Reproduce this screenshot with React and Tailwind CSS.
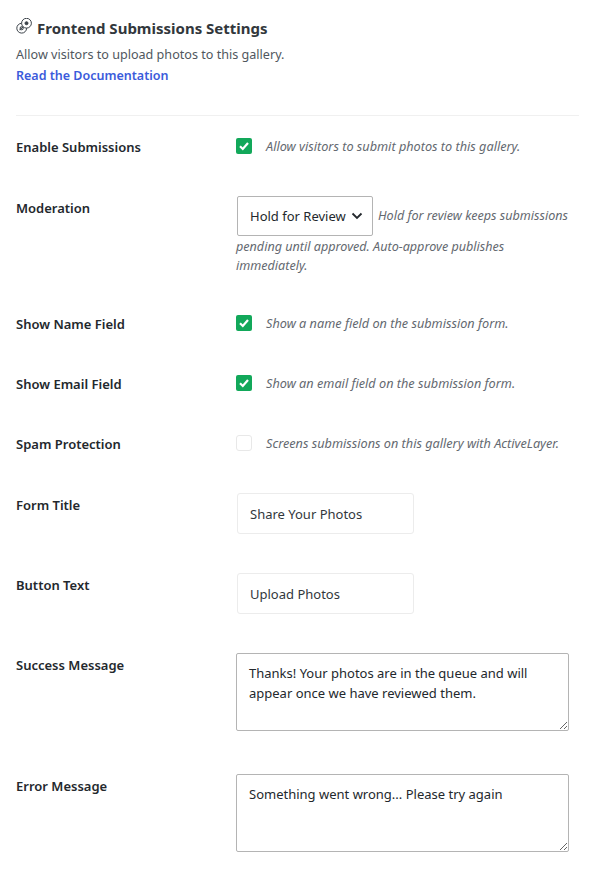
const font = { fontFamily: '"Noto Sans", sans-serif' };

function Check({ on }) {
  if (!on) return <span className="block w-4 h-4 shrink-0 rounded-[3px] border border-[#e8e8e8] bg-white" />;
  return (
    <span className="flex items-center justify-center w-4 h-4 shrink-0 rounded-[2px] bg-[#12a85a]">
      <svg width="12" height="12" viewBox="0 0 12 12" fill="none" stroke="#fff" strokeWidth="2.2"><path d="M2 6.3 L4.8 9 L10 3" /></svg>
    </span>
  );
}

function Label({ children, className = "" }) {
  return <div className={`w-[220px] shrink-0 text-[13px] leading-5 font-semibold text-[#23282d] ${className}`}>{children}</div>;
}

function CheckRow({ label, on, text, className }) {
  return (
    <div className={`flex items-center ${className}`}>
      <Label className="pt-[2px]">{label}</Label>
      <Check on={on} />
      <span className="ml-[14px] text-[12.7px] leading-5 italic text-[#646970] whitespace-nowrap">{text}</span>
    </div>
  );
}

function TextRow({ label, value, className }) {
  return (
    <div className={`flex ${className}`}>
      <Label className="pt-[2px]">{label}</Label>
      <input readOnly value={value} className="ml-px w-[177px] h-[41px] px-3 rounded-[3px] border border-[#ececec] bg-white text-[13px] text-[#32373c] outline-none" />
    </div>
  );
}

function AreaRow({ label, value, className }) {
  return (
    <div className={`flex ${className}`}>
      <Label className="pt-[2px]">{label}</Label>
      <textarea readOnly value={value} className="block w-[333px] h-[78px] px-3 pt-[9px] pb-[5px] rounded-[2px] border border-[#b4b4b4] bg-white text-[13px] leading-5 text-[#23282d] outline-none resize" />
    </div>
  );
}

export default function App() {
  return (
    <div style={font} className="w-[594px] h-[890px] bg-white pl-4 pr-[15px] pt-[18px] overflow-hidden">
      <div className="flex items-center gap-[5px] h-5">
        <svg width="16" height="16" viewBox="0 0 16 16" fill="none" stroke="#3c434a" strokeWidth="1" className="-mt-[5px]">
          <circle cx="5.7" cy="10.2" r="4.9" />
          <circle cx="5.7" cy="10.2" r="1.6" />
          <path d="M3.6 12.2 L7.8 8.2" strokeWidth="1.1" />
          <circle cx="10.5" cy="5.2" r="4.9" fill="#fff" />
          <circle cx="10.5" cy="5.2" r="1.5" fill="#3c434a" />
        </svg>
        <h2 className="text-[15px] leading-5 font-bold text-[#32373c]">Frontend Submissions Settings</h2>
      </div>
      <p className="mt-[7px] text-[12.6px] leading-5 text-[#50575e]">Allow visitors to upload photos to this gallery.</p>
      <a className="block mt-px text-[12.5px] leading-5 font-semibold text-[#3b5bdb]">Read the Documentation</a>
      <div className="mt-[29px] h-px bg-[#f0f0f0]" />

      <CheckRow className="mt-[19px]" label="Enable Submissions" on text="Allow visitors to submit photos to this gallery." />

      <div className="flex mt-[39px]">
        <Label className="pt-[2px]">Moderation</Label>
        <div className="w-[333px] text-[12.6px] leading-[19px] italic text-[#646970]">
          <span className="relative inline-block ml-px mr-[5px] mb-px align-middle not-italic">
            <select className="block appearance-none w-[136px] h-[40px] pl-3 border border-[#b4b4b4] rounded-[2px] bg-white text-[13px] text-[#23282d] outline-none">
              <option>Hold for Review</option>
            </select>
            <svg width="12" height="8" viewBox="0 0 12 8" fill="none" stroke="#23282d" strokeWidth="1.8" className="absolute right-[10px] top-[16px] pointer-events-none">
              <path d="M1.5 1.5 L6 6 L10.5 1.5" />
            </svg>
          </span>
          Hold for review keeps submissions pending until approved. Auto-approve publishes immediately.
        </div>
      </div>

      <CheckRow className="mt-[37px]" label="Show Name Field" on text="Show a name field on the submission form." />
      <CheckRow className="mt-[38px]" label="Show Email Field" on text="Show an email field on the submission form." />
      <CheckRow className="mt-[38px]" label="Spam Protection" text="Screens submissions on this gallery with ActiveLayer." />

      <TextRow className="mt-[39px]" label="Form Title" value="Share Your Photos" />
      <TextRow className="mt-[39px]" label="Button Text" value="Upload Photos" />
      <AreaRow className="mt-[39px]" label="Success Message" value="Thanks! Your photos are in the queue and will appear once we have reviewed them." />
      <AreaRow className="mt-[43px]" label="Error Message" value="Something went wrong... Please try again" />
    </div>
  );
}
